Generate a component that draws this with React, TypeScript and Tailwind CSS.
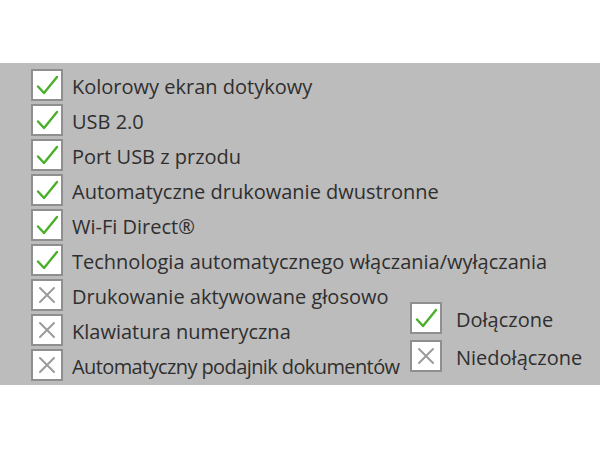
import React from 'react';

const rows: { label: string; ok: boolean; tight?: boolean }[] = [
  { label: 'Kolorowy ekran dotykowy', ok: true },
  { label: 'USB 2.0', ok: true },
  { label: 'Port USB z przodu', ok: true },
  { label: 'Automatyczne drukowanie dwustronne', ok: true },
  { label: 'Wi-Fi Direct®', ok: true },
  { label: 'Technologia automatycznego włączania/wyłączania', ok: true },
  { label: 'Drukowanie aktywowane głosowo', ok: false },
  { label: 'Klawiatura numeryczna', ok: false },
  { label: 'Automatyczny podajnik dokumentów', ok: false, tight: true },
];

function Box({ ok }: { ok: boolean }) {
  return (
    <div className="w-[32px] h-[32px] shrink-0 bg-white border-2 border-[#8f8f8f] flex items-center justify-center">
      <svg width="28" height="28" viewBox="0 0 28 28" fill="none">
        {ok ? (
          <path d="M5 15.5 L11 22 L24 6" stroke="#4caf2c" strokeWidth="2.4" strokeLinecap="round" strokeLinejoin="round" />
        ) : (
          <path d="M7 7 L21 21 M21 7 L7 21" stroke="#9b9b9b" strokeWidth="2" strokeLinecap="round" />
        )}
      </svg>
    </div>
  );
}

function Row({ label, ok, tight, gap = 'gap-[9px]' }: { label: string; ok: boolean; tight?: boolean; gap?: string }) {
  return (
    <div className={`flex items-center h-[32px] ${gap}`}>
      <Box ok={ok} />
      <span className={`text-[20px] leading-none pt-[3px] text-[#2f2f2f] whitespace-nowrap ${tight ? 'tracking-[-0.6px]' : ''}`}>{label}</span>
    </div>
  );
}

export default function App() {
  return (
    <div className="w-[600px] h-[450px] bg-white pt-[63px]" style={{ fontFamily: '"Open Sans", sans-serif' }}>
      <div className="bg-[#bcbcbc] h-[322px] pl-[31px] pt-[6px] flex flex-col gap-[3px]">
        {rows.slice(0, 6).map(r => <Row key={r.label} {...r} />)}
        <div className="flex">
          <div className="w-[379px] flex flex-col gap-[3px]">
            {rows.slice(6).map(r => <Row key={r.label} {...r} />)}
          </div>
          <div className="pt-[23px] flex flex-col gap-[6px]">
            <Row label="Dołączone" ok gap="gap-[14px]" />
            <Row label="Niedołączone" ok={false} gap="gap-[14px]" />
          </div>
        </div>
      </div>
    </div>
  );
}
